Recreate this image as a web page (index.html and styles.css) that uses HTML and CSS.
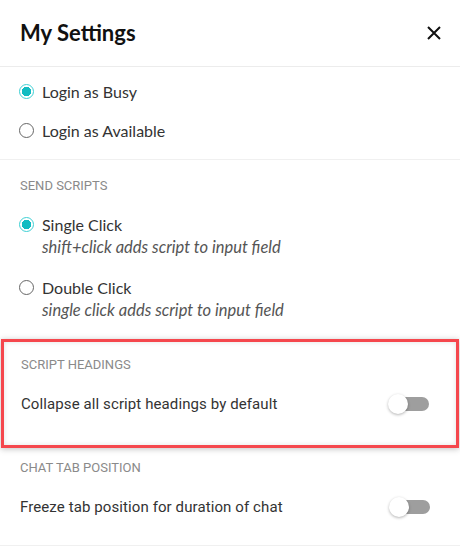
FILE: index.html
```html
<!DOCTYPE html>
<html lang="en">
<head>
    <meta charset="UTF-8">
    <meta name="viewport" content="width=device-width, initial-scale=1.0">
    <title>My Settings</title>
    <link rel="stylesheet" href="styles.css">
</head>
<body>
    <div class="panel">
        <div class="panel-header">
            <h1>My Settings</h1>
            <svg class="close" width="16" height="16" viewBox="0 0 16 16">
                <path d="M2 2 L14 14 M14 2 L2 14" stroke="#111" stroke-width="2" fill="none"/>
            </svg>
        </div>

        <div class="section login">
            <div class="radio-row">
                <span class="radio checked"></span>
                <span class="radio-label">Login as Busy</span>
            </div>
            <div class="radio-row">
                <span class="radio"></span>
                <span class="radio-label">Login as Available</span>
            </div>
        </div>

        <div class="section scripts">
            <h2>Send Scripts</h2>
            <div class="option">
                <div class="option-row">
                    <span class="radio checked"></span>
                    <span class="radio-label">Single Click</span>
                </div>
                <p class="hint">shift+click adds script to input field</p>
            </div>
            <div class="option">
                <div class="option-row">
                    <span class="radio"></span>
                    <span class="radio-label">Double Click</span>
                </div>
                <p class="hint">single click adds script to input field</p>
            </div>
        </div>

        <div class="section toggles highlight">
            <h2>Script Headings</h2>
            <div class="toggle-row">
                <span>Collapse all script headings by default</span>
                <span class="switch"><span class="track"></span><span class="knob"></span></span>
            </div>
        </div>

        <div class="section toggles last">
            <h2>Chat Tab Position</h2>
            <div class="toggle-row">
                <span>Freeze tab position for duration of chat</span>
                <span class="switch"><span class="track"></span><span class="knob"></span></span>
            </div>
        </div>
    </div>
</body>
</html>
```

FILE: styles.css
```css
* {
    margin: 0;
    padding: 0;
    box-sizing: border-box;
}

body {
    font-family: Lato, "Noto Sans", sans-serif;
    background: #ffffff;
    color: #333333;
    width: 460px;
}

.panel-header {
    height: 67px;
    display: flex;
    align-items: center;
    justify-content: space-between;
    padding: 0 18px 0 20px;
    border-bottom: 1px solid #ececec;
}

.panel-header h1 {
    font-size: 22px;
    font-weight: 700;
    color: #111111;
    margin-top: -1px;
}

.section {
    border-bottom: 1px solid #f0f0f0;
}

.login {
    padding: 5px 20px 9px 19px;
}

.radio-row {
    height: 39px;
    display: flex;
    align-items: center;
}

.radio {
    width: 15px;
    height: 15px;
    border-radius: 50%;
    border: 1.3px solid #666666;
    margin-right: 8px;
    flex-shrink: 0;
}

.radio.checked {
    border: 1.5px solid #3fd0d4;
    background: radial-gradient(circle, #12bcc2 0 4.5px, #ffffff 5px);
}

.radio-label {
    font-size: 16px;
    color: #333333;
}

.section h2 {
    font-family: Roboto, "Liberation Sans", sans-serif;
    font-size: 13px;
    font-weight: 400;
    line-height: 16px;
    color: #8a8a8a;
    text-transform: uppercase;
}

.scripts {
    padding: 18px 20px 18px 19px;
    border-bottom: none;
}

.scripts h2 {
    margin-bottom: 18px;
    padding-left: 1px;
}

.option + .option {
    margin-top: 17px;
}

.option-row {
    height: 24px;
    display: flex;
    align-items: center;
}

.hint {
    font-size: 16.5px;
    font-style: italic;
    color: #555555;
    line-height: 22px;
    padding-left: 23px;
}

.toggles {
    padding: 12px 30px 23px 20px;
}

.toggles h2 {
    margin-bottom: 16px;
}

.highlight {
    border: 3px solid #f5474d;
    margin: 0 1px;
    padding: 15px 27px 26px 17px;
    box-shadow: 0 1px 6px rgba(0, 0, 0, 0.25), inset 0 0 5px rgba(0, 0, 0, 0.12);
}

.toggle-row {
    height: 30px;
    display: flex;
    align-items: center;
    justify-content: space-between;
    font-family: Roboto, "Liberation Sans", sans-serif;
    font-size: 15px;
    letter-spacing: 0.1px;
    color: #333333;
}

.switch {
    position: relative;
    width: 41px;
    height: 20px;
}

.switch .track {
    position: absolute;
    right: 0;
    top: 3px;
    width: 36px;
    height: 14px;
    border-radius: 7px;
    background: #9e9e9e;
}

.switch .knob {
    position: absolute;
    left: 0;
    top: 0;
    width: 20px;
    height: 20px;
    border-radius: 50%;
    background: #ffffff;
    box-shadow: 0 1px 3px rgba(0, 0, 0, 0.3);
}
```
